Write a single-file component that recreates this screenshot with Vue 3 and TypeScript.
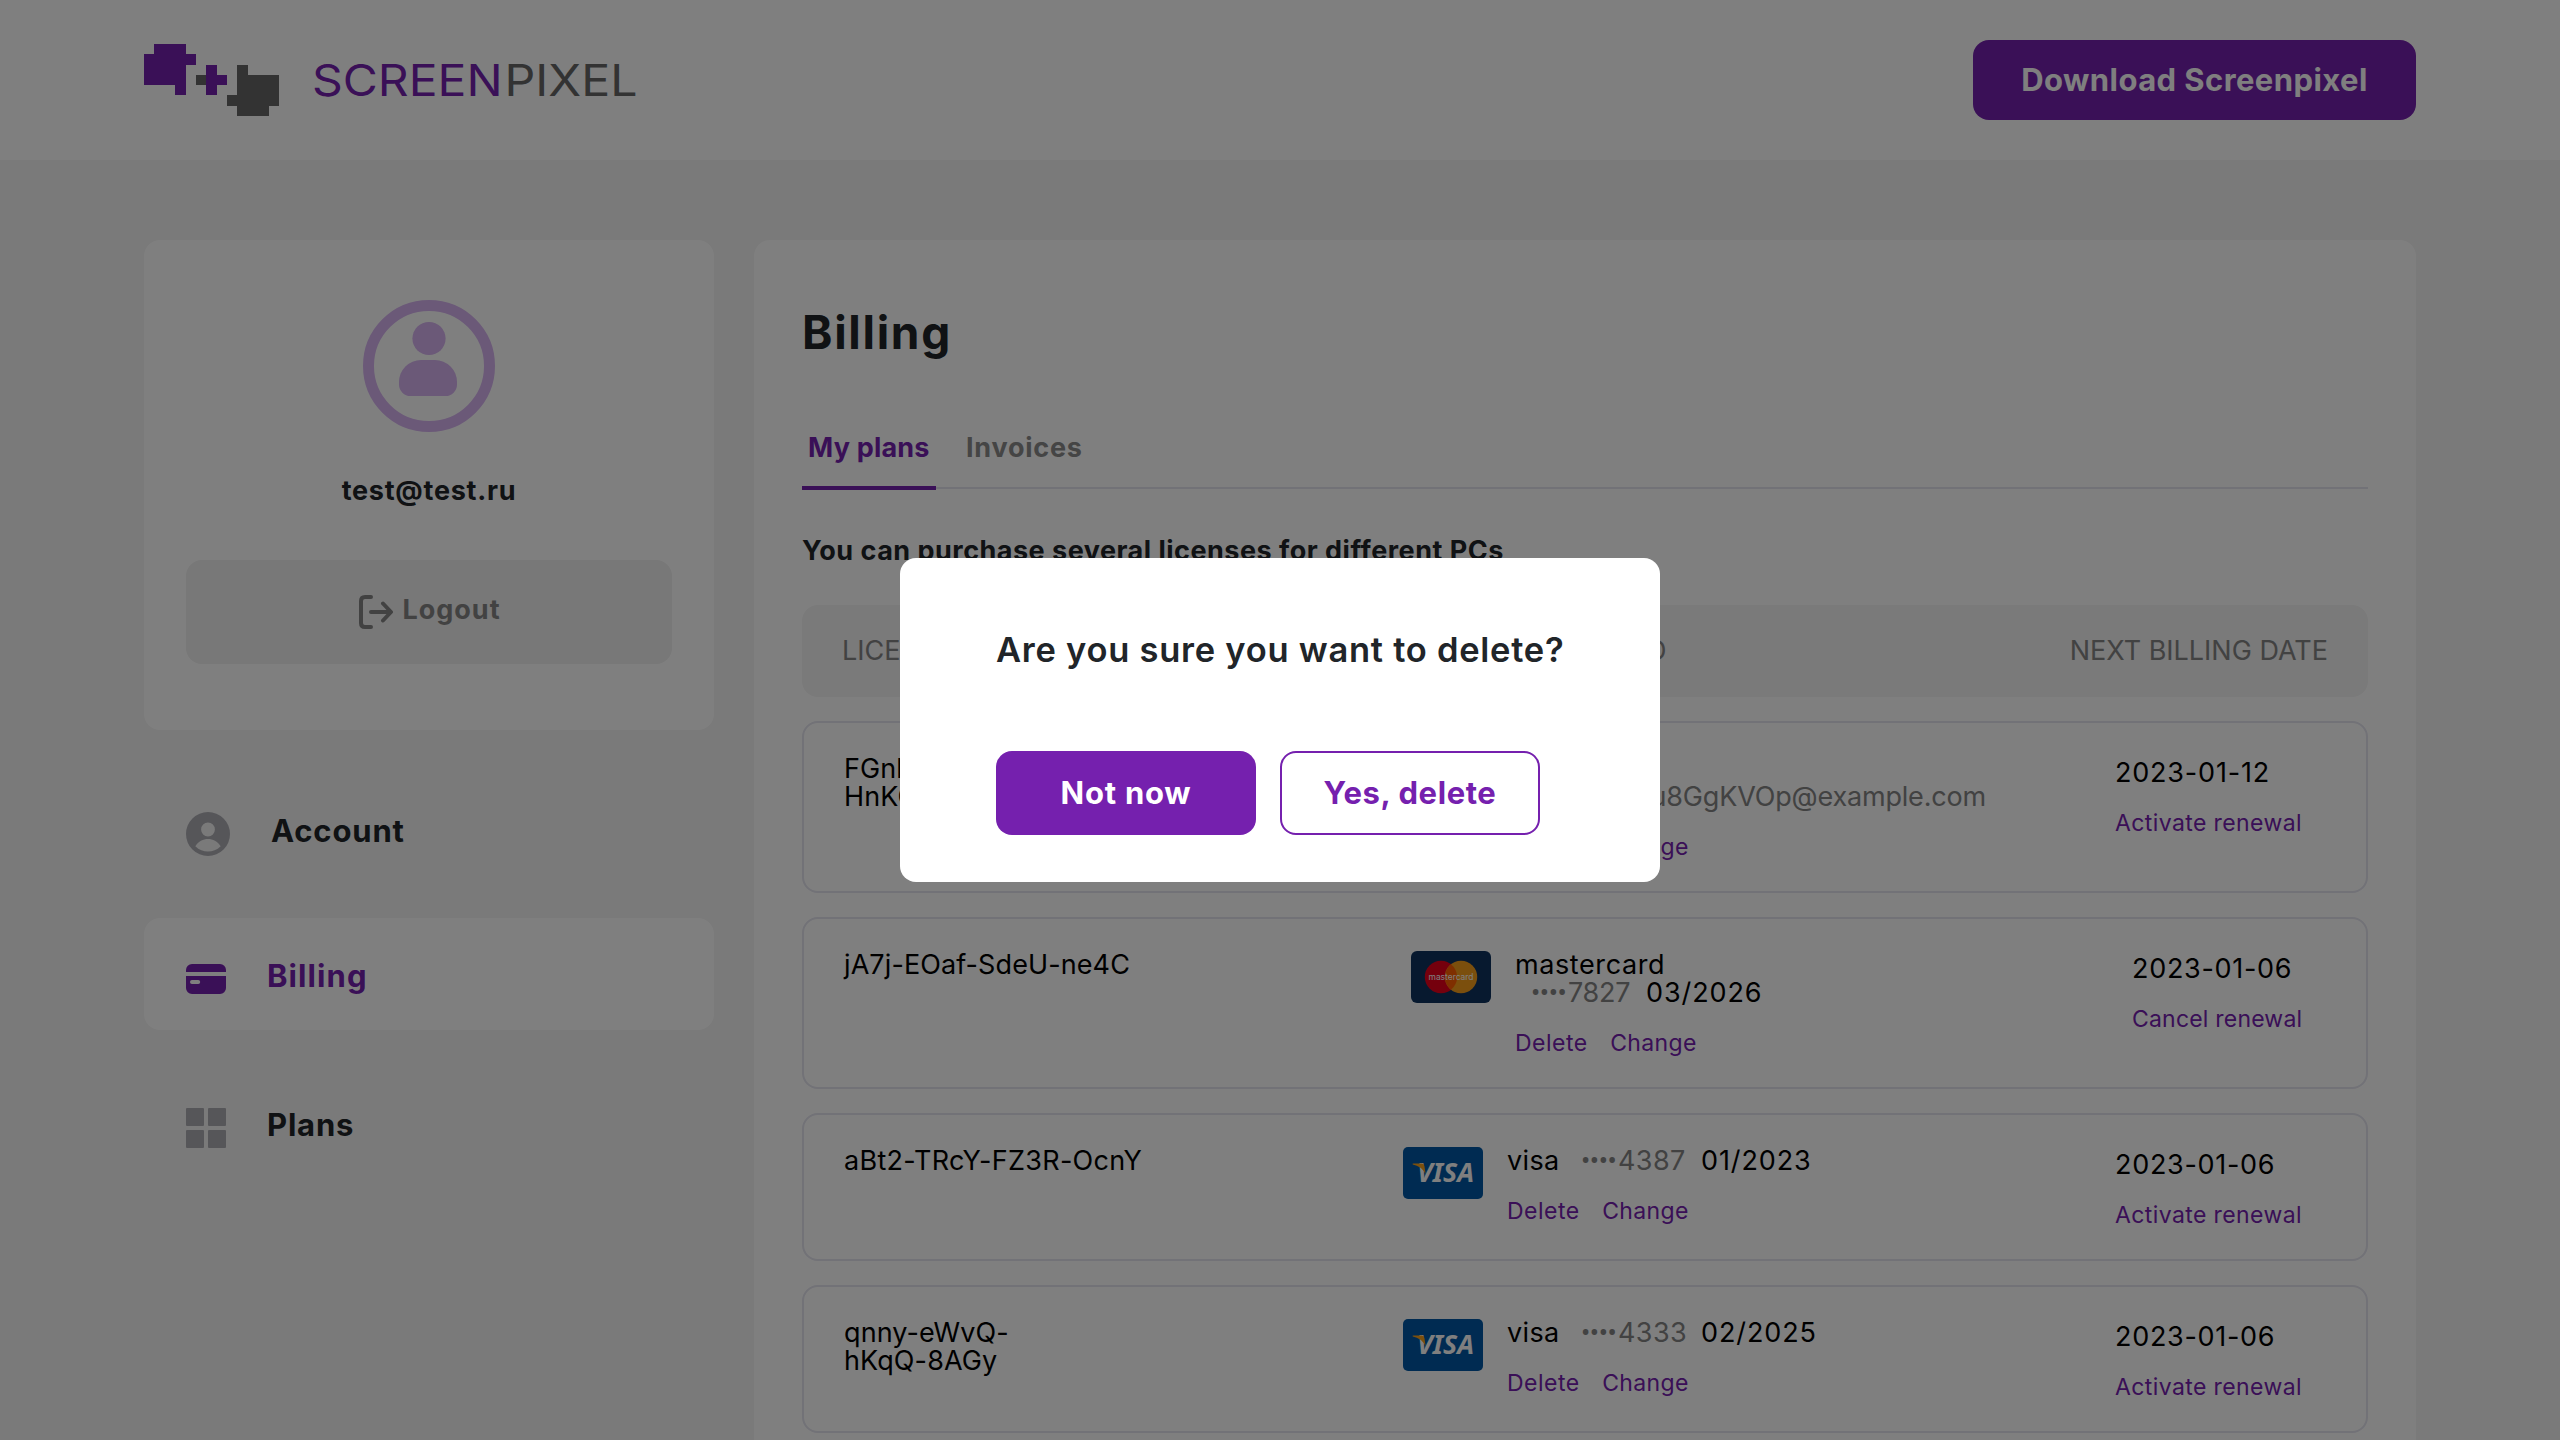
<script setup lang="ts">
interface Plan {
  license: string[]
  brand: 'paypal' | 'mastercard' | 'visa'
  digits?: string
  expires?: string
  email?: string
  date: string
  action: string
}

const plans: Plan[] = [
  { license: ['FGnk-aPQe-', 'HnKG-7LmS'], brand: 'paypal', email: 'x9ZbRkMdu8GgKVOp@example.com', date: '2023-01-12', action: 'Activate renewal' },
  { license: ['jA7j-EOaf-SdeU-ne4C'], brand: 'mastercard', digits: '7827', expires: '03/2026', date: '2023-01-06', action: 'Cancel renewal' },
  { license: ['aBt2-TRcY-FZ3R-OcnY'], brand: 'visa', digits: '4387', expires: '01/2023', date: '2023-01-06', action: 'Activate renewal' },
  { license: ['qnny-eWvQ-', 'hKqQ-8AGy'], brand: 'visa', digits: '4333', expires: '02/2025', date: '2023-01-06', action: 'Activate renewal' },
]
</script>

<template>
  <div class="page">
    <header class="header">
      <div class="logo">
        <svg width="135" height="72" viewBox="0 0 13 7" preserveAspectRatio="none" shape-rendering="crispEdges">
          <path fill="#7520ae" d="M1 0H4V1H5V2H4V5H3V4H0V1H1ZM6 2H7V3H8V4H7V5H6Z" />
          <path fill="#666" d="M5 3H6V4H5ZM9 2H10V3H13V6H12V7H9V6H8V5H9Z" />
        </svg>
        <svg class="wordmark" width="330" height="72" viewBox="0 0 330 72">
          <text x="0" y="52" textLength="190.6" lengthAdjust="spacingAndGlyphs" fill="#7520ae">SCREEN</text>
          <text x="192.500" y="52" textLength="133" lengthAdjust="spacingAndGlyphs" fill="#666">PIXEL</text>
        </svg>
      </div>
      <button class="download">Download Screenpixel</button>
    </header>

    <div class="content">
      <aside class="sidebar">
        <section class="profile">
          <svg width="132" height="132" viewBox="0 0 132 132" fill="#d6b3f0">
            <circle cx="66" cy="66" r="60.5" fill="none" stroke="#d6b3f0" stroke-width="11" />
            <circle cx="66" cy="38.5" r="16.6" />
            <path d="M58 60H72A22 22 0 0 1 94 82V84.500A11.500 11.500 0 0 1 82.500 96H47.500A11.500 11.500 0 0 1 36 84.500V82A22 22 0 0 1 58 60Z" />
          </svg>
          <div class="email">test@test.ru</div>
          <button class="logout">
            <svg width="34" height="34" viewBox="0 0 34 34" fill="none" stroke="#848484" stroke-width="4" stroke-linecap="round" stroke-linejoin="round">
              <path d="M12 2H6Q2 2 2 6V28Q2 32 6 32H12M12 17H31.500M24 8.500L32 17L24 25.500" />
            </svg>
            <span>Logout</span>
          </button>
        </section>

        <nav class="nav">
          <a class="item account">
            <svg width="44" height="44" viewBox="0 0 44 44" fill="#acacb3" fill-rule="evenodd">
              <path d="M22 0A22 22 0 1 1 22 44A22 22 0 1 1 22 0ZM22 10.600A6.900 6.900 0 1 0 22 24.400A6.900 6.900 0 1 0 22 10.600ZM9.300 34.200C13 38 17.500 39.600 22 39.600S31 38 34.700 34.200C31.500 29.500 27 27.100 22 27.100S12.500 29.500 9.300 34.200Z" />
            </svg>
            <span>Account</span>
          </a>
          <a class="item billing">
            <svg width="40" height="30" viewBox="0 0 40 30" fill="#7520ae" fill-rule="evenodd">
              <path d="M6 0H34A6 6 0 0 1 40 6V8H0V6A6 6 0 0 1 6 0ZM0 12H40V24A6 6 0 0 1 34 30H6A6 6 0 0 1 0 24ZM6 16A2 2 0 0 0 6 20H12.200A2 2 0 0 0 12.200 16Z" />
            </svg>
            <span>Billing</span>
          </a>
          <a class="item plans">
            <svg width="40" height="40" viewBox="0 0 40 40" fill="#acacb3">
              <rect width="18" height="18" rx="1" /><rect x="22" width="18" height="18" rx="1" />
              <rect y="22" width="18" height="18" rx="1" /><rect x="22" y="22" width="18" height="18" rx="1" />
            </svg>
            <span>Plans</span>
          </a>
        </nav>
      </aside>

      <main class="main">
        <h1>Billing</h1>
        <div class="tabs">
          <a class="tab active">My plans</a>
          <a class="tab second">Invoices</a>
        </div>
        <p class="hint">You can purchase several licenses for different PCs</p>

        <div class="thead">
          <span>LICENSE</span>
          <span>PAYMENT METHOD</span>
          <span>NEXT BILLING DATE</span>
        </div>

        <div v-for="p in plans" :key="p.license[0]" class="row">
          <div class="license" :class="{ wide: p.license[0].startsWith('aBt2') }"><div v-for="l in p.license" :key="l">{{ l }}</div></div>
          <div class="payment" :class="p.brand">
            <svg v-if="p.brand === 'mastercard'" class="card" width="80" height="52" viewBox="0 0 80 52">
              <rect width="80" height="52" rx="6" fill="#0f325e" />
              <circle cx="30" cy="26" r="16.200" fill="#eb001b" />
              <circle cx="50" cy="26" r="16.200" fill="#f79e1b" />
              <path d="M40 13.300A16.200 16.200 0 0 1 40 38.700A16.200 16.200 0 0 1 40 13.300Z" fill="#ff5f00" />
              <text x="17.500" y="28.700" textLength="45" lengthAdjust="spacingAndGlyphs" class="mc-label">mastercard</text>
            </svg>
            <svg v-else-if="p.brand === 'visa'" class="card" width="80" height="52" viewBox="0 0 80 52">
              <rect width="80" height="52" rx="5" fill="#0057a4" />
              <text x="14" y="35.200" textLength="57" lengthAdjust="spacingAndGlyphs" class="visa-label">VISA</text>
              <path d="M9.700 16.600H18.500Q21 16.600 21.400 19L22.600 27Q18.500 19 9.700 17.400Z" fill="#f7a01b" />
            </svg>
            <svg v-else class="card" width="80" height="52" viewBox="0 0 80 52">
              <rect width="80" height="52" rx="5" fill="#f0f0f5" />
            </svg>
            <div class="details">
              <div class="method">
                <span class="brand">{{ p.brand }}</span>
                <span v-if="p.email" class="mail">{{ p.email }}</span>
                <span v-else class="number"><span class="dots">••••</span><span class="digits">{{ p.digits }}</span><span class="expires">{{ p.expires }}</span></span>
              </div>
              <div class="links"><a class="del">Delete</a><a class="chg">Change</a></div>
            </div>
          </div>
          <div class="renewal" :class="{ cancel: p.action === 'Cancel renewal' }">
            <div class="date" :class="{ narrow: p.date === '2023-01-12' }">{{ p.date }}</div>
            <a class="action">{{ p.action }}</a>
          </div>
        </div>
      </main>
    </div>

    <div class="overlay">
      <div class="modal">
        <h2>Are you sure you want to delete?</h2>
        <div class="buttons">
          <button class="primary">Not now</button>
          <button class="outline">Yes, delete</button>
        </div>
      </div>
    </div>
  </div>
</template>

<style>
body { margin: 0; overflow: hidden; }
</style>

<style scoped>
* { box-sizing: border-box; }
.page { position: relative; height: 1440px; overflow: hidden; background: #f4f4f4; font-family: Inter, "Liberation Sans", sans-serif; color: #212529; }
button { font-family: inherit; border: 0; padding: 0; }
h1, h2, p { margin: 0; }
svg { display: block; flex: none; }

.header { height: 160px; padding: 0 144px; background: #fff; display: flex; align-items: center; justify-content: space-between; }
.logo { display: flex; align-items: center; gap: 33px; }
.wordmark { font-size: 44px; overflow: visible; }
.download { width: 443px; height: 80px; padding-bottom: 2px; border-radius: 16px; background: #7520ae; color: #fff; font-size: 31px; font-weight: 700; letter-spacing: .42px; }

.content { display: flex; align-items: flex-start; gap: 40px; padding: 80px 144px 0; }
.sidebar { width: 570px; flex: none; }
.profile { height: 490px; padding: 60px 42px 0; background: #fff; border-radius: 16px; display: flex; flex-direction: column; align-items: center; }
.email { margin-top: 43px; font-size: 27px; line-height: 32px; font-weight: 700; letter-spacing: .75px; }
.logout { margin-top: 53px; width: 100%; height: 104px; padding-left: 2px; border-radius: 16px; background: #f0f0f0; color: #848484; display: flex; align-items: center; justify-content: center; gap: 9px; font-size: 27px; font-weight: 700; letter-spacing: 1px; }
.logout span { margin-bottom: 6px; }

.nav { margin-top: 43px; }
.item { display: flex; align-items: center; gap: 41px; height: 112px; padding: 10px 42px 0; border-radius: 16px; font-size: 31px; font-weight: 700; letter-spacing: .85px; }
.item span { margin-bottom: 8px; }
.billing { margin: 33px 0 37px; background: #fff; color: #7520ae; letter-spacing: 1.1px; }
.plans { letter-spacing: .8px; }

.main { flex: 1; min-width: 0; height: 1300px; padding: 64px 48px 0; background: #fff; border-radius: 16px; }
h1 { font-size: 46px; line-height: 56px; font-weight: 700; letter-spacing: 1.7px; }
.tabs { margin-top: 74px; display: flex; gap: 30px; background: linear-gradient(#e4e4ee, #e4e4ee) 0 calc(100% - 1px) / 100% 2px no-repeat; font-size: 27px; line-height: 28px; font-weight: 700; }
.tab { height: 56px; color: #8a8a8a; letter-spacing: .75px; }
.tab.active { width: 134px; padding-left: 6px; white-space: nowrap; border-bottom: 4px solid #7520ae; color: #7520ae; letter-spacing: .2px; }
.hint { margin-top: 47px; font-size: 27px; line-height: 28px; font-weight: 700; letter-spacing: .49px; }

.thead { margin-top: 40px; height: 92px; padding: 0 40px 2px; display: grid; grid-template-columns: 570px 1fr auto; align-items: center; border-radius: 16px; background: #f4f4f4; color: #848484; font-size: 27px; }
.row { margin-top: 24px; padding: 32px 64px 30.4px 40px; display: grid; grid-template-columns: 559px 1fr auto; border: 2px solid #e4e4ee; border-radius: 16px; color: #000; font-size: 27px; line-height: 28px; }
.license { letter-spacing: .1px; }
.license.wide { letter-spacing: .3px; }
.payment { display: flex; align-items: flex-start; gap: 24px; }
.payment.mastercard { padding-left: 8px; }
.mc-label { font-size: 9px; fill: #fff; }
.visa-label { font-family: "Noto Sans", sans-serif; font-size: 26px; font-weight: 700; font-style: italic; fill: #fff; }
.method { display: flex; white-space: nowrap; }
.visa .brand { width: 58px; letter-spacing: .35px; }
.mastercard .method, .paypal .method { flex-direction: column; }
.mastercard .brand { letter-spacing: .6px; }
.number { display: flex; padding-left: 16px; }
.dots { width: 37px; font-family: Roboto, sans-serif; font-size: 27.5px; letter-spacing: -.45px; color: #848484; }
.digits { width: 67px; color: #848484; letter-spacing: .39px; }
.mastercard .digits { width: 62px; letter-spacing: -.3px; }
.expires { margin-left: 16px; letter-spacing: .9px; }
.mail { width: 479px; text-align: right; color: #848484; letter-spacing: -.18px; }
.links, .renewal a { color: #7520ae; font-size: 23px; line-height: 28px; }
.links { margin-top: 21.6px; display: flex; gap: 22.500px; }
.del { letter-spacing: .5px; }
.chg { letter-spacing: .34px; }
.renewal { width: 187px; padding-top: 4px; white-space: nowrap; }
.renewal.cancel { width: 170px; }
.date { letter-spacing: .7px; margin-bottom: 21.6px; }
.date.narrow { letter-spacing: .8px; }
.renewal a { display: block; letter-spacing: .4px; }
.renewal.cancel a { letter-spacing: .2px; }

.overlay { position: absolute; inset: 0; background: rgba(0, 0, 0, .5); display: flex; align-items: center; justify-content: center; }
.modal { width: 760px; height: 324px; padding: 70px 96px 0; border-radius: 16px; background: #fff; }
h2 { font-size: 34.500px; line-height: 44px; font-weight: 600; letter-spacing: .74px; white-space: nowrap; }
.buttons { margin-top: 79px; display: flex; gap: 24px; }
.buttons button { width: 260px; height: 84px; padding-bottom: 2px; border-radius: 16px; font-size: 31px; font-weight: 700; }
.buttons .primary { background: #7520ae; color: #fff; letter-spacing: .75px; }
.buttons .outline { background: #fff; border: 2px solid #7520ae; color: #7520ae; letter-spacing: .6px; }
</style>
